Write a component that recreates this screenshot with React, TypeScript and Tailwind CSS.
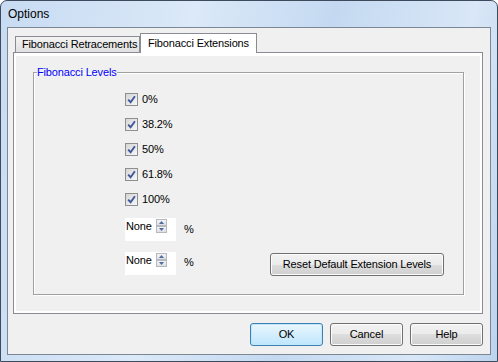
const btnBase =
  "flex h-[23px] items-center justify-center rounded-[3px] border text-[11px] text-black";

function Check({ label }: { label: string }) {
  return (
    <div className="flex h-[25px] items-center">
      <span className="flex h-[13px] w-[13px] items-center justify-center border border-[#8e8f8f] bg-gradient-to-br from-[#d6d6d6] to-[#f7f7f7]">
        <svg width="9" height="9" viewBox="0 0 9 9">
          <path d="M1.2 4.6 L3.6 7.2 L7.9 1.2" fill="none" stroke="#40569a" strokeWidth="1.9" />
        </svg>
      </span>
      <span className="ml-[4px] leading-[13px]">{label}</span>
    </div>
  );
}

function SpinHalf({ up }: { up?: boolean }) {
  return (
    <span className="flex h-[7px] w-[11px] items-center justify-center border border-[#b4b8bf] bg-gradient-to-b from-[#f4f4f4] to-[#dcdfe4]">
      <svg width="5" height="3" viewBox="0 0 5 3">
        <path d={up ? "M0 3 L2.5 0 L5 3 Z" : "M0 0 L2.5 3 L5 0 Z"} fill="#4f6a9a" />
      </svg>
    </span>
  );
}

function Spin() {
  return (
    <div className="flex h-[23px] w-[51px] items-start bg-white pl-px pt-px">
      <span className="leading-[14px]">None</span>
      <div className="ml-[4px] flex flex-col">
        <SpinHalf up />
        <SpinHalf />
      </div>
    </div>
  );
}

function DlgButton({ label, def }: { label: string; def?: boolean }) {
  return (
    <button
      className={
        def
          ? `${btnBase} w-[73px] border-[#3c7fb1] bg-gradient-to-b from-[#eaf6fd] to-[#bee6fd] shadow-[inset_0_0_0_1px_#bde8fd]`
          : `${btnBase} w-[73px] border-[#707070] bg-[linear-gradient(#f2f2f2,#ebebeb_50%,#dddddd_50%,#cfcfcf)] shadow-[inset_0_0_0_1px_#fcfcfc]`
      }
    >
      {label}
    </button>
  );
}

export default function App() {
  return (
    <div className="h-[362px] w-[498px] font-['Liberation_Sans',Arial,sans-serif] text-[11px] tracking-[-0.15px] text-black">
      <div className="flex h-full flex-col rounded-t-[7px] border border-[#3d4b5c] bg-[linear-gradient(100deg,#c7dbf2,#dbe9f8_35%,#c4d9f1_60%,#d9e7f7_85%,#bcd4ee)]">
        {/* title bar */}
        <div className="flex h-[26px] items-center pl-[7px] text-[12px] tracking-normal">Options</div>

        {/* client area */}
        <div className="mx-[6px] mb-[6px] flex flex-1 flex-col border border-[#7b8794] bg-[#f0f0f0] pl-[5px] pr-[7px]">
          {/* tabs */}
          <div className="flex h-[24px] items-end pl-[2px]">
            <div className="flex h-[16px] w-[125px] items-center whitespace-nowrap border border-b-0 border-[#898c95] bg-gradient-to-b from-[#f3f3f3] to-[#e1e1e1] pl-[6px] leading-[13px]">
              Fibonacci Retracements
            </div>
            <div className="relative z-10 -mb-px h-[20px] w-[117px] whitespace-nowrap border border-b-0 border-[#898c95] bg-white pl-[7px] pt-[3px] leading-[13px]">
              Fibonacci Extensions
            </div>
          </div>

          {/* tab panel */}
          <div className="h-[262px] border border-[#898c95]">
            <div className="h-full border-x-2 border-b-2 border-t-[3px] border-white pl-[17px] pr-[16px] pt-[10px]">
              <fieldset className="h-[229px] border border-[#a0a0a0] shadow-[inset_1px_1px_0_#fff,1px_1px_0_#fff]">
                <legend className="ml-[3px] p-0 leading-[13px] text-[#0000ff]">Fibonacci Levels</legend>
                <div className="flex flex-col pl-[91px] pr-[19px] pt-[8px]">
                  <Check label="0%" />
                  <Check label="38.2%" />
                  <Check label="50%" />
                  <Check label="61.8%" />
                  <Check label="100%" />
                  <div className="mt-[6px] flex items-start">
                    <Spin />
                    <span className="ml-[8px] mt-[5px] leading-[13px]">%</span>
                  </div>
                  <div className="mt-[11px] flex items-start">
                    <Spin />
                    <span className="ml-[8px] mt-[4px] leading-[13px]">%</span>
                    <button className={`${btnBase} ml-auto mt-px w-[174px] border-[#707070] bg-[linear-gradient(#f2f2f2,#ebebeb_50%,#dddddd_50%,#cfcfcf)] shadow-[inset_0_0_0_1px_#fcfcfc]`}>
                      Reset Default Extension Levels
                    </button>
                  </div>
                </div>
              </fieldset>
            </div>
          </div>

          {/* dialog buttons */}
          <div className="mt-[9px] flex justify-end gap-[7px]">
            <DlgButton label="OK" def />
            <DlgButton label="Cancel" />
            <DlgButton label="Help" />
          </div>
        </div>
      </div>
    </div>
  );
}
